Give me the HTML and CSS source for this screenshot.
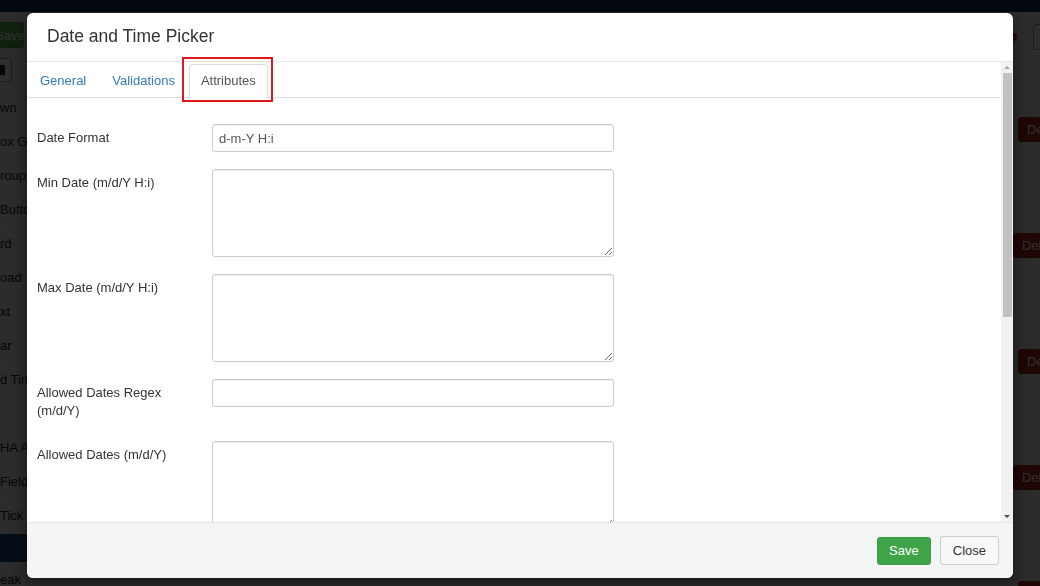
FILE: index.html
```html
<!DOCTYPE html>
<html lang="en">
<head>
    <meta charset="UTF-8">
    <meta name="viewport" content="width=device-width, initial-scale=1.0">
    <title>Date and Time Picker</title>
    <link rel="stylesheet" href="styles.css">
</head>
<body>
    <div class="topbar"></div>
    <div class="page">
        <aside class="sidebar">
            <div class="side-tools">
                <button class="side-save">Save</button>
                <button class="side-icon"><span></span></button>
            </div>
            <ul class="field-list">
                <li>wn</li>
                <li>ox G</li>
                <li>roup</li>
                <li>Butto</li>
                <li>rd</li>
                <li>oad</li>
                <li>xt</li>
                <li>ar</li>
                <li>d Tim</li>
                <li></li>
                <li>HA A</li>
                <li>Field</li>
                <li>Tick</li>
                <li class="current"></li>
                <li>eak</li>
            </ul>
        </aside>
        <main class="canvas"></main>
        <aside class="rightcol">
            <div class="right-head">
                <span class="dot"></span>
                <button class="upd">Update</button>
            </div>
            <div class="del-row"><button class="del">Delete</button></div>
            <div class="del-row shift"><button class="del">Delete</button></div>
            <div class="del-row"><button class="del">Delete</button></div>
            <div class="del-row shift"><button class="del">Delete</button></div>
            <div class="del-row"><button class="del">Delete</button></div>
        </aside>
    </div>

    <div class="backdrop"></div>

    <div class="modal">
        <div class="modal-header">
            <h4 class="modal-title">Date and Time Picker</h4>
        </div>
        <div class="modal-body">
            <div class="body-scroll">
                <ul class="tabs">
                    <li><a href="#">General</a></li>
                    <li><a href="#">Validations</a></li>
                    <li class="active"><a href="#">Attributes</a></li>
                </ul>
                <div class="form">
                    <div class="row">
                        <label>Date Format</label>
                        <input type="text" value="d-m-Y H:i">
                    </div>
                    <div class="row">
                        <label>Min Date (m/d/Y H:i)</label>
                        <textarea></textarea>
                    </div>
                    <div class="row">
                        <label>Max Date (m/d/Y H:i)</label>
                        <textarea></textarea>
                    </div>
                    <div class="row">
                        <label>Allowed Dates Regex (m/d/Y)</label>
                        <input type="text">
                    </div>
                    <div class="row">
                        <label>Allowed Dates (m/d/Y)</label>
                        <textarea></textarea>
                    </div>
                    <div class="row">
                        <label>Disabled Dates (m/d/Y)</label>
                        <textarea></textarea>
                    </div>
                    <div class="row">
                        <label>Disabled Week Days</label>
                        <input type="text">
                    </div>
                </div>
            </div>
            <div class="scrollbar">
                <span class="sb-arrow up"></span>
                <span class="sb-thumb"></span>
                <span class="sb-arrow down"></span>
            </div>
        </div>
        <div class="modal-footer">
            <button class="btn btn-save">Save</button>
            <button class="btn btn-close">Close</button>
        </div>
        <span class="callout"></span>
    </div>
</body>
</html>
```

FILE: styles.css
```css
*{
    box-sizing: border-box;
}
body{
    margin: 0;
    height: 586px;
    overflow: hidden;
    font-family: 'Liberation Sans', Arial, sans-serif;
    font-size: 13px;
    color: #333;
    background: #eee;
}
button{
    font-family: 'Liberation Sans', Arial, sans-serif;
    font-size: 13px;
}

/* page behind the modal */
.topbar{
    height: 12px;
    background: #112753;
}
.page{
    display: flex;
    height: 574px;
}
.sidebar{
    width: 27px;
    flex-shrink: 0;
    overflow: hidden;
    background: #f2f2f2;
    white-space: nowrap;
}
.side-tools{
    height: 79px;
    padding-top: 10px;
}
.side-save{
    display: block;
    margin-left: -10px;
    width: 34px;
    height: 26px;
    padding: 0 0 0 4px;
    text-align: left;
    border: 1px solid #4cae4c;
    border-radius: 3px;
    background: #5cb85c;
    color: #fff;
}
.side-icon{
    display: block;
    margin: 10px 0 0 -10px;
    width: 22px;
    height: 24px;
    padding: 0;
    border: 1px solid #999;
    border-radius: 3px;
    background: #fff;
    text-align: right;
}
.side-icon span{
    display: inline-block;
    width: 5px;
    height: 10px;
    margin-right: 6px;
    background: #222;
}
.field-list{
    list-style: none;
    margin: 0;
    padding: 0;
}
.field-list li{
    height: 34px;
    line-height: 33px;
    border-bottom: 1px solid #fff;
    color: #222;
    font-size: 13px;
}
.field-list .current{
    height: 29px;
    margin-top: 1px;
    background: #1d4f86;
}
.canvas{
    flex: 1;
    background: #eee;
}
.rightcol{
    width: 27px;
    flex-shrink: 0;
    overflow: hidden;
    white-space: nowrap;
    background: #f2f2f2;
}
.right-head{
    display: flex;
    align-items: center;
    height: 88px;
    padding-bottom: 38px;
    border-bottom: 1px solid #fff;
}
.right-head .dot{
    flex-shrink: 0;
    width: 8px;
    height: 8px;
    margin-left: -4px;
    border-radius: 50%;
    background: #c9302c;
}
.right-head .upd{
    flex-shrink: 0;
    margin-left: 16px;
    height: 26px;
    padding: 0 6px;
    border: 1px solid #999;
    border-radius: 3px;
    background: #fff;
    color: #222;
}
.del-row{
    height: 116px;
    padding: 17px 0 0 5px;
    border-bottom: 1px solid #fff;
}
.del-row.shift{
    padding-left: 0;
}
.del{
    height: 25px;
    padding: 0 8px;
    border: 1px solid #a02622;
    border-radius: 3px;
    background: #b02a26;
    color: #fff;
}
.backdrop{
    position: fixed;
    inset: 0;
    background: rgba(0, 0, 0, .82);
}

/* modal */
.modal{
    position: absolute;
    left: 27px;
    top: 13px;
    width: 986px;
    height: 565px;
    display: flex;
    flex-direction: column;
    background: #fff;
    border-radius: 6px;
    box-shadow: 0 5px 15px rgba(0, 0, 0, .5);
    overflow: hidden;
}
.modal-header{
    flex-shrink: 0;
    height: 49px;
    padding: 0 20px 1px;
    display: flex;
    align-items: center;
    border-bottom: 1px solid #e5e5e5;
}
.modal-title{
    margin: 0;
    font-size: 17.5px;
    font-weight: normal;
    color: #333;
}
.modal-body{
    flex: 1;
    display: flex;
    min-height: 0;
}
.body-scroll{
    flex: 1;
    overflow: hidden;
}

/* scrollbar of the body, drawn */
.scrollbar{
    flex-shrink: 0;
    width: 12px;
    display: flex;
    flex-direction: column;
    background: #f1f1f1;
}
.sb-arrow{
    height: 11px;
    display: flex;
    align-items: center;
    justify-content: center;
}
.sb-arrow::before{
    content: "";
    border-left: 3px solid transparent;
    border-right: 3px solid transparent;
}
.sb-arrow.up::before{
    border-bottom: 3px solid #a3a3a3;
}
.sb-arrow.down{
    margin-top: auto;
}
.sb-arrow.down::before{
    border-top: 3px solid #505050;
}
.sb-thumb{
    height: 244px;
    margin: 0 1px 0 2px;
    background: #c1c1c1;
}

.tabs{
    display: flex;
    list-style: none;
    margin: 0;
    padding: 2px 0 0 1px;
    height: 36px;
    border-bottom: 1px solid #ddd;
}
.tabs li{
    margin-right: 2px;
    margin-bottom: -1px;
}
.tabs a{
    display: block;
    height: 34px;
    line-height: 31px;
    padding: 0 11px;
    border: 1px solid transparent;
    border-radius: 4px 4px 0 0;
    color: #337ab7;
    font-size: 13px;
    text-decoration: none;
}
.tabs .active a{
    color: #555;
    background: #fff;
    border-color: #ddd #ddd transparent;
}

.form{
    padding: 26px 0 20px 10px;
}
.row{
    display: flex;
    margin-bottom: 17px;
}
.row label{
    flex-shrink: 0;
    width: 175px;
    padding: 5px 15px 4px 0;
    line-height: 18px;
    font-size: 13px;
    color: #333;
}
.row input,
.row textarea{
    width: 402px;
    border: 1px solid #ccc;
    border-radius: 3px;
    box-shadow: inset 0 1px 1px rgba(0, 0, 0, .075);
    font-family: 'Liberation Sans', Arial, sans-serif;
    font-size: 13px;
    color: #555;
    outline: none;
}
.row input{
    height: 28px;
    padding: 0 6px;
}
.row textarea{
    height: 88px;
    padding: 6px;
    resize: vertical;
}

.modal-footer{
    flex-shrink: 0;
    height: 56px;
    display: flex;
    justify-content: flex-end;
    align-items: center;
    gap: 9px;
    padding: 0 14px 0 0;
    background: #f4f4f4;
    border-top: 1px solid #e5e5e5;
}
.btn{
    height: 28px;
    border-radius: 3px;
    cursor: pointer;
}
.btn-save{
    padding: 0 11px;
    border: 1px solid #3a9a41;
    background: #3fa447;
    color: #fff;
}
.btn-close{
    height: 29px;
    padding: 0 12px;
    border: 1px solid #ccc;
    background: #f8f8f8;
    color: #333;
}

/* red highlight drawn over the active tab */
.callout{
    position: absolute;
    left: 155px;
    top: 44px;
    width: 91px;
    height: 45px;
    border: 2px solid #e0161b;
    pointer-events: none;
}
```
